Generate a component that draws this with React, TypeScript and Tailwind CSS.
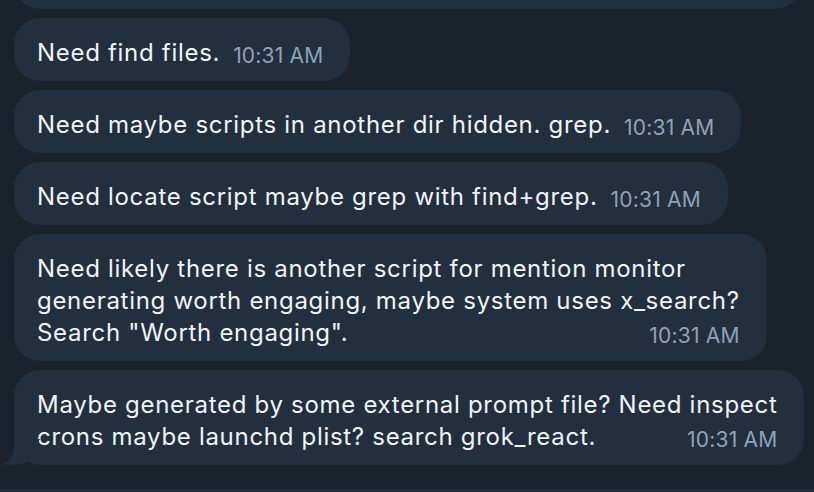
import React from 'react';

const font = { fontFamily: 'Inter, "Noto Sans", sans-serif' };

const Time: React.FC = () => (
    <span className="shrink-0 text-[21px] leading-[32px] tracking-[0.2px] text-[#8fa2b6] translate-y-[2px]">10:31 AM</span>
);

interface BubbleProps {
    lines: string[];
    tail?: boolean;
}

const Bubble: React.FC<BubbleProps> = ({ lines, tail }) => {
    const last = lines[lines.length - 1];
    const head = lines.slice(0, -1);
    return (
        <div className="relative self-start rounded-[26px] bg-[#212f3f] pl-[23px] pr-[27px] pt-[19px] pb-[12px]">
            {head.map((l, i) => (
                <div key={i} className="h-[32px] whitespace-nowrap">{l}</div>
            ))}
            <div className="flex h-[32px] items-baseline justify-between gap-[13px] whitespace-nowrap">
                <span>{last}</span>
                <Time />
            </div>
            {tail && (
                <svg className="absolute -left-[14px] bottom-0" width="54" height="30" viewBox="0 0 54 30">
                    <path d="M14 4 L14 12 C14 20 9 26 2 29.6 C10 30.2 20 29.6 28 27 L40 4 Z" fill="#212f3f" />
                </svg>
            )}
        </div>
    );
};

const messages: { lines: string[]; tail?: boolean }[] = [
    { lines: ['Need find files.'] },
    { lines: ['Need maybe scripts in another dir hidden. grep.'] },
    { lines: ['Need locate script maybe grep with find+grep.'] },
    {
        lines: [
            'Need likely there is another script for mention monitor',
            'generating worth engaging, maybe system uses x_search?',
            'Search "Worth engaging".',
        ],
    },
    {
        lines: [
            'Maybe generated by some external prompt file? Need inspect',
            'crons maybe launchd plist? search grok_react.',
        ],
        tail: true,
    },
];

export default function App() {
    return (
        <div className="flex h-[492px] w-[814px] flex-col overflow-hidden bg-[#1a222b] text-[24px] leading-[32px] tracking-[0.7px] text-[#f1f4f7]" style={font}>
            <div className="flex flex-1 flex-col gap-[9px] px-[14px]">
                <div className="-mt-[51px] h-[60px] w-[787px] shrink-0 rounded-[26px] bg-[#212f3f]" />
                {messages.map((m, i) => (
                    <Bubble key={i} lines={m.lines} tail={m.tail} />
                ))}
            </div>
            <div className="h-[3px] shrink-0 bg-[#232d39]" />
        </div>
    );
}
